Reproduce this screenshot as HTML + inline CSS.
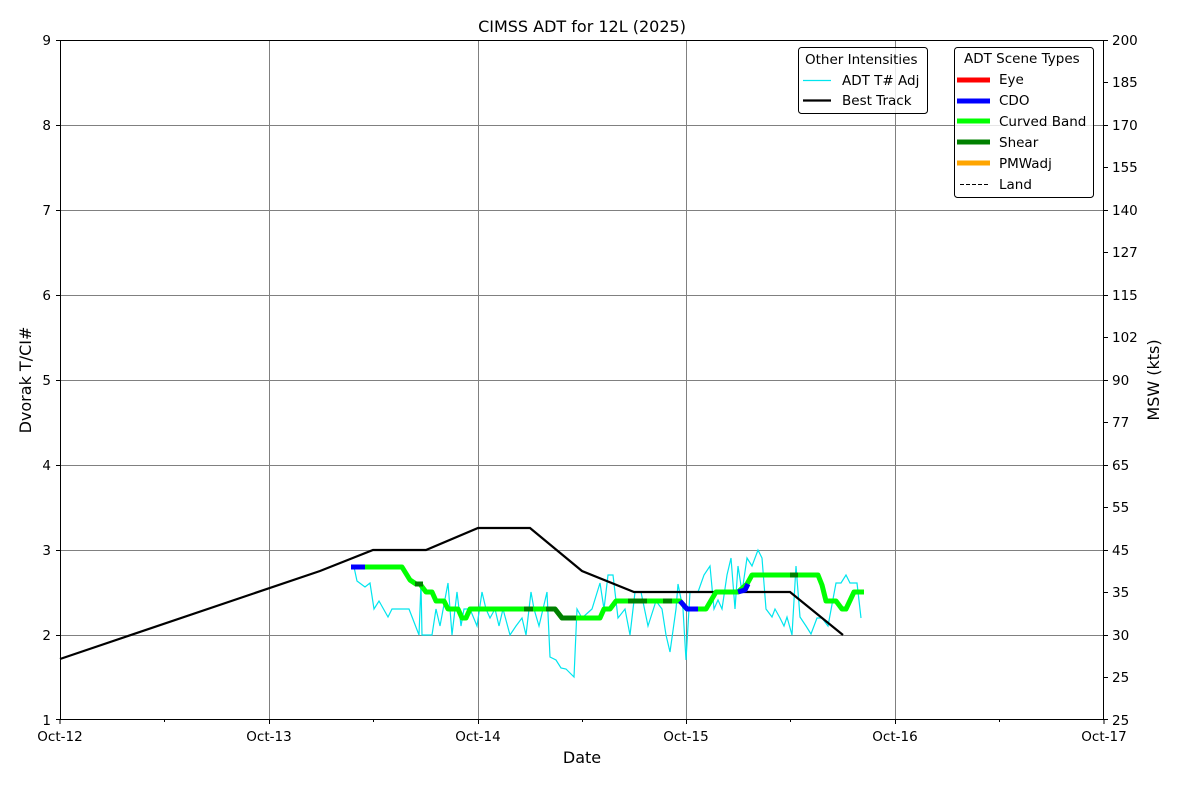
<!DOCTYPE html>
<html><head><meta charset="utf-8"><style>html,body{margin:0;padding:0;background:#fff}svg{display:block}text{font-family:"DejaVu Sans","Liberation Sans",sans-serif;fill:#000}</style></head><body>
<svg width="1200" height="800" viewBox="0 0 1200 800" xmlns="http://www.w3.org/2000/svg">
<rect width="1200" height="800" fill="#fff"/>
<g stroke="#808080" stroke-width="1">
<line x1="269.5" y1="40" x2="269.5" y2="720"/><line x1="478.5" y1="40" x2="478.5" y2="720"/><line x1="686.5" y1="40" x2="686.5" y2="720"/><line x1="895.5" y1="40" x2="895.5" y2="720"/>
<line x1="60" y1="125.5" x2="1104" y2="125.5"/><line x1="60" y1="210.5" x2="1104" y2="210.5"/><line x1="60" y1="295.5" x2="1104" y2="295.5"/><line x1="60" y1="380.5" x2="1104" y2="380.5"/><line x1="60" y1="465.5" x2="1104" y2="465.5"/><line x1="60" y1="550.5" x2="1104" y2="550.5"/><line x1="60" y1="635.5" x2="1104" y2="635.5"/>
</g>
<polyline fill="none" stroke="#00e5ee" stroke-width="1.2" points="354,567 357,581 365,587 370,583 374,609 379,601 388,617 392,609 409,609 419,635 421,583 422,635 432,635 436,609 440,626 448,583 452,635 457,592 461,626 464,609 470,609 477,626 482,592 486,609 490,618 495,609 499,626 503,609 510,635 516,626 522,618 526,635 531,592 534,609 539,626 547,592 550,657 556,660 561,668 566,669 574,677 577,609 582,618 592,609 600,583 604,609 608,575 613,575 618,618 625,609 630,635 635,592 641,592 648,626 656,601 662,609 666,635 670,652 676,609 678,584 683,609 686,660 690,592 698,592 704,575 710,566 714,609 718,600 722,609 727,575 731,558 735,609 738,566 742,592 747,558 752,566 758,550 762,558 766,609 772,617 775,609 780,618 784,626 787,617 792,635 796,566 800,617 806,626 811,634 817,618 822,618 828,626 836,583 841,583 846,575 850,583 857,583 861,618"/>
<polyline fill="none" stroke="#000" stroke-width="2.2" points="60,659 320,571 373,550 426,550 478,528 530,528 582,571 634,592 790,592 843,635"/>
<g fill="none" stroke-width="5" stroke-linejoin="round">
<polyline stroke="#00ff00" points="365,567 402,567 410,580 416,584 420,584 426,592 432,592 436,601 444,601 448,609 458,609 462,618 466,618 470,609 555,609 562,618 600,618 604,609 610,609 616,601 680,601 687,609 698,609 706,609 716,592 738,592 747,584 752,575 818,575 822,585 826,601 836,601 842,609 846,609 854,592 864,592"/>
<polyline stroke="#0000ff" points="351,567 365,567"/>
<polyline stroke="#0000ff" points="680,601 687,609 698,609"/>
<polyline stroke="#0000ff" points="738,592 745,590 748,584"/>
<polyline stroke="#008000" points="415,584 423,584"/>
<polyline stroke="#008000" points="524,609 533,609"/>
<polyline stroke="#008000" points="546,609 555,609 562,618 576,618"/>
<polyline stroke="#008000" points="628,601 647,601"/>
<polyline stroke="#008000" points="663,601 672,601"/>
<polyline stroke="#008000" points="790,575 798,575"/>
</g>
<rect x="60.5" y="40.5" width="1043" height="679" fill="none" stroke="#000" stroke-width="1"/>
<g stroke="#000" stroke-width="1">
<line x1="60" y1="720" x2="60" y2="724"/><line x1="269.5" y1="720" x2="269.5" y2="724"/><line x1="478.5" y1="720" x2="478.5" y2="724"/><line x1="686.5" y1="720" x2="686.5" y2="724"/><line x1="895.5" y1="720" x2="895.5" y2="724"/><line x1="1104" y1="720" x2="1104" y2="724"/>
<line x1="164.5" y1="720" x2="164.5" y2="722"/><line x1="373.5" y1="720" x2="373.5" y2="722"/><line x1="582.5" y1="720" x2="582.5" y2="722"/><line x1="790.5" y1="720" x2="790.5" y2="722"/><line x1="999.5" y1="720" x2="999.5" y2="722"/>
<line x1="56" y1="40.5" x2="60" y2="40.5"/><line x1="56" y1="125.5" x2="60" y2="125.5"/><line x1="56" y1="210.5" x2="60" y2="210.5"/><line x1="56" y1="295.5" x2="60" y2="295.5"/><line x1="56" y1="380.5" x2="60" y2="380.5"/><line x1="56" y1="465.5" x2="60" y2="465.5"/><line x1="56" y1="550.5" x2="60" y2="550.5"/><line x1="56" y1="635.5" x2="60" y2="635.5"/><line x1="56" y1="719.5" x2="60" y2="719.5"/>
</g>
<g stroke="#000" stroke-width="1">
<line x1="1104" y1="40.5" x2="1108" y2="40.5"/><line x1="1104" y1="82.5" x2="1108" y2="82.5"/><line x1="1104" y1="125.5" x2="1108" y2="125.5"/><line x1="1104" y1="167.5" x2="1108" y2="167.5"/><line x1="1104" y1="210.5" x2="1108" y2="210.5"/><line x1="1104" y1="252.5" x2="1108" y2="252.5"/><line x1="1104" y1="295.5" x2="1108" y2="295.5"/><line x1="1104" y1="337.5" x2="1108" y2="337.5"/><line x1="1104" y1="380.5" x2="1108" y2="380.5"/><line x1="1104" y1="422.5" x2="1108" y2="422.5"/><line x1="1104" y1="465.5" x2="1108" y2="465.5"/><line x1="1104" y1="507.5" x2="1108" y2="507.5"/><line x1="1104" y1="550.5" x2="1108" y2="550.5"/><line x1="1104" y1="592.5" x2="1108" y2="592.5"/><line x1="1104" y1="635.5" x2="1108" y2="635.5"/><line x1="1104" y1="677.5" x2="1108" y2="677.5"/><line x1="1104" y1="719.5" x2="1108" y2="719.5"/>
</g>
<g font-size="13.5" text-anchor="end">
<text x="51" y="45">9</text><text x="51" y="130">8</text><text x="51" y="215">7</text><text x="51" y="300">6</text><text x="51" y="385">5</text><text x="51" y="470">4</text><text x="51" y="555">3</text><text x="51" y="640">2</text><text x="51" y="725">1</text>
</g>
<g font-size="13.5">
<text x="1112" y="45">200</text><text x="1112" y="87">185</text><text x="1112" y="130">170</text><text x="1112" y="172">155</text><text x="1112" y="215">140</text><text x="1112" y="257">127</text><text x="1112" y="300">115</text><text x="1112" y="342">102</text><text x="1112" y="385">90</text><text x="1112" y="427">77</text><text x="1112" y="470">65</text><text x="1112" y="512">55</text><text x="1112" y="555">45</text><text x="1112" y="597">35</text><text x="1112" y="640">30</text><text x="1112" y="682">25</text><text x="1112" y="725">25</text>
</g>
<g font-size="13.5" text-anchor="middle">
<text x="60" y="741">Oct-12</text><text x="269" y="741">Oct-13</text><text x="478" y="741">Oct-14</text><text x="686" y="741">Oct-15</text><text x="895" y="741">Oct-16</text><text x="1104" y="741">Oct-17</text>
</g>
<text x="582" y="32" font-size="16" text-anchor="middle">CIMSS ADT for 12L (2025)</text>
<text x="582" y="763" font-size="16" text-anchor="middle">Date</text>
<text transform="translate(31,380) rotate(-90)" font-size="16" text-anchor="middle">Dvorak T/CI#</text>
<text transform="translate(1159,380) rotate(-90)" font-size="16" text-anchor="middle">MSW (kts)</text>
<rect x="798.5" y="47.5" width="129" height="66" rx="3" fill="#fff" fill-opacity="0.8" stroke="#000"/>
<g font-size="13.5">
<text x="805" y="64">Other Intensities</text>
<line x1="803" y1="80.5" x2="831" y2="80.5" stroke="#00e5ee" stroke-width="1.2"/><text x="842" y="85">ADT T# Adj</text>
<line x1="803" y1="100.5" x2="831" y2="100.5" stroke="#000" stroke-width="2.2"/><text x="842" y="105">Best Track</text>
</g>
<rect x="954.5" y="47.5" width="139" height="150" rx="3" fill="#fff" fill-opacity="0.8" stroke="#000"/>
<g font-size="13.5">
<text x="964" y="63">ADT Scene Types</text>
<line x1="957" y1="80" x2="990" y2="80" stroke="#ff0000" stroke-width="5"/><text x="999" y="84">Eye</text>
<line x1="957" y1="101" x2="990" y2="101" stroke="#0000ff" stroke-width="5"/><text x="999" y="105">CDO</text>
<line x1="957" y1="121" x2="990" y2="121" stroke="#00ff00" stroke-width="5"/><text x="999" y="126">Curved Band</text>
<line x1="957" y1="142" x2="990" y2="142" stroke="#008000" stroke-width="5"/><text x="999" y="147">Shear</text>
<line x1="957" y1="163" x2="990" y2="163" stroke="#ffa500" stroke-width="5"/><text x="999" y="168">PMWadj</text>
<line x1="960" y1="184.5" x2="988" y2="184.5" stroke="#000" stroke-width="1" stroke-dasharray="4,2"/><text x="999" y="189">Land</text>
</g>
</svg>
</body></html>
